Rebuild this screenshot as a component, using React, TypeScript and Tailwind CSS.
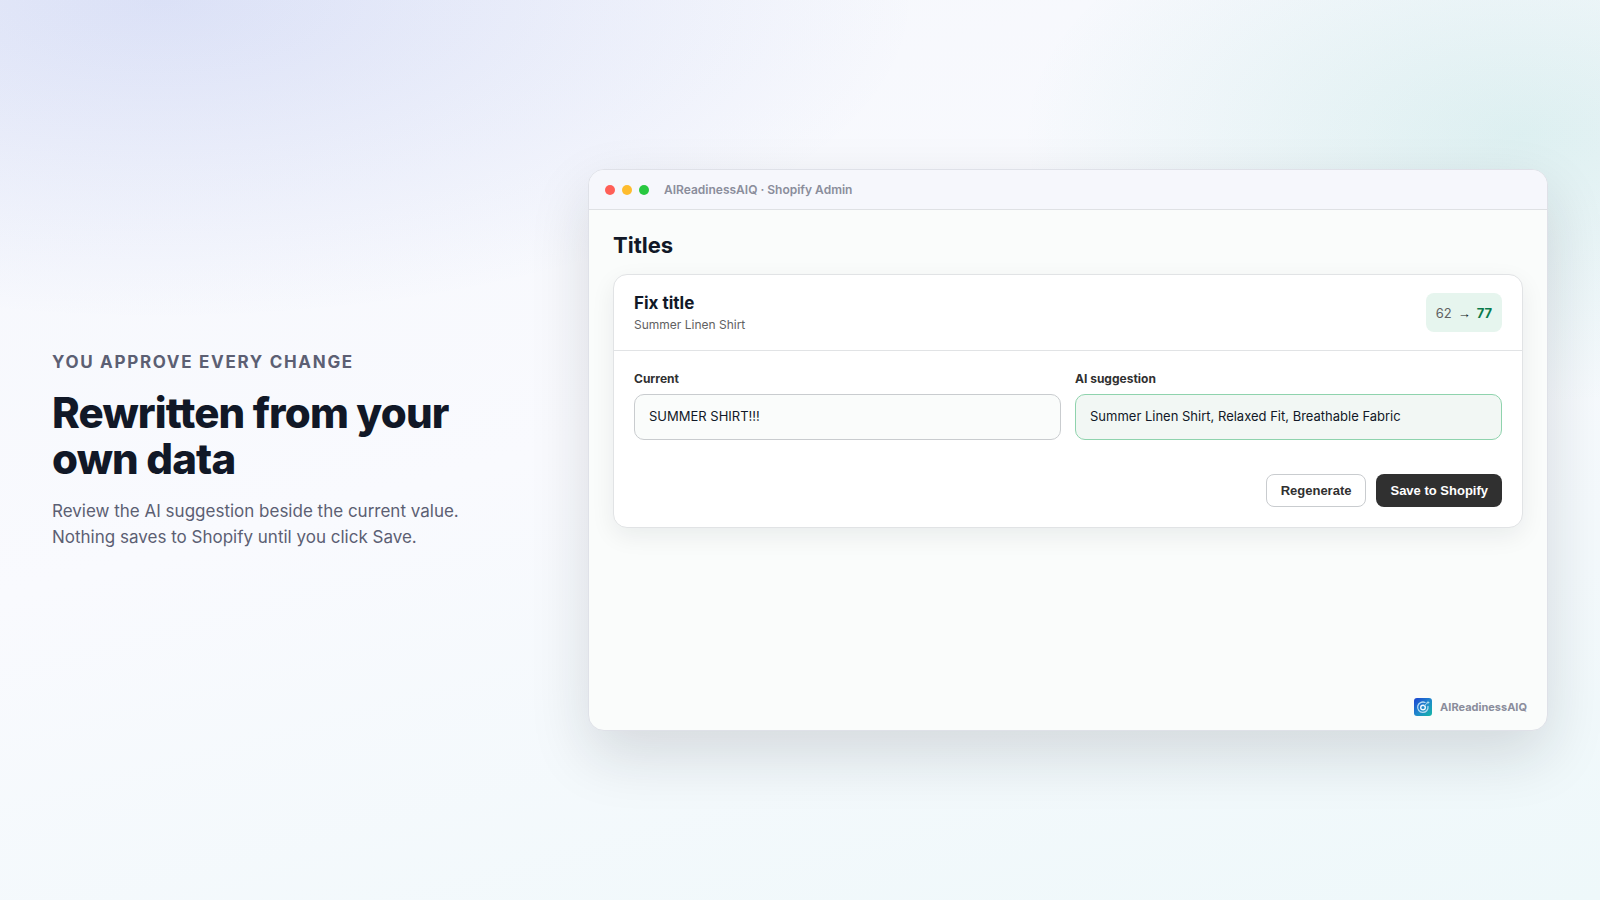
import React from "react";

const trafficLights = ["bg-[#ff5f57]", "bg-[#febc2e]", "bg-[#28c840]"];

function BrandMark() {
  return (
    <svg viewBox="0 0 36 36" className="size-[18px]" aria-hidden="true">
      <defs>
        <linearGradient id="brand" x1="0" y1="0" x2="1" y2="1">
          <stop offset="0.1" stopColor="#1d4fd0" />
          <stop offset="0.5" stopColor="#1f86cc" />
          <stop offset="1" stopColor="#14b8a6" />
        </linearGradient>
      </defs>
      <rect width="36" height="36" rx="6" fill="url(#brand)" />
      <path
        d="M22 9A10.400 10.400 0 1 0 28 17"
        fill="none"
        stroke="#b5d9f2"
        strokeWidth="2.600"
        strokeLinecap="round"
      />
      <circle cx="18" cy="19" r="4.600" fill="none" stroke="#f4fafe" strokeWidth="2.800" />
      <path d="M21 15.500l5-5" stroke="#b5d9f2" strokeWidth="2" strokeLinecap="round" />
      <path d="M28 5l1 3 3 1-3 1-1 3-1-3-3-1 3-1z" fill="#b9e0ee" />
    </svg>
  );
}

function Field({
  id,
  label,
  value,
  tone,
}: {
  id: string;
  label: string;
  value: string;
  tone: string;
}) {
  return (
    <div className="flex min-w-0 flex-col gap-[7px]">
      <label htmlFor={id} className="text-xs leading-4 font-bold text-[#303030]">
        {label}
      </label>
      <input
        id={id}
        readOnly
        defaultValue={value}
        className={`w-full rounded-[10px] border px-3.5 pt-3 pb-3.5 text-[13px] leading-[18px] text-[#111827] outline-none ${tone}`}
      />
    </div>
  );
}

export default function App() {
  return (
    <main className="grid min-h-screen grid-cols-[1fr_2fr] items-center gap-14 bg-[radial-gradient(ellipse_760px_320px_at_10%_0%,rgba(43,75,210,0.13),transparent),radial-gradient(ellipse_500px_270px_at_95%_15%,rgba(20,165,145,0.12),transparent),linear-gradient(165deg,#f5f7fc_0%,#f9fafe_45%,#eef8fa_100%)] px-[52px] font-['Inter',sans-serif] text-[#111827]">
      <section>
        <p className="text-[17px] leading-[22px] font-bold tracking-[0.1em] text-[#5c5f73] uppercase">
          You approve every change
        </p>
        <h1 className="mt-[17px] text-[42px] leading-[46px] font-extrabold tracking-[-0.02em]">
          Rewritten from your own data
        </h1>
        <p className="mt-4 max-w-[420px] text-[17px] leading-[26px] text-[#5c5f73]">
          Review the AI suggestion beside the current value. Nothing saves to Shopify until you
          click Save.
        </p>
      </section>

      <section className="flex min-h-[562px] flex-col overflow-hidden rounded-2xl border border-[#dfe1e8] bg-[#fafcfb] shadow-[0_24px_60px_rgba(20,26,32,0.14)]">
        <header className="flex items-center border-b border-[#dfe1e4] bg-[#f6f7fc] px-4 py-[11px]">
          <div className="flex gap-[7px]">
            {trafficLights.map((color) => (
              <span key={color} className={`size-2.5 rounded-full ${color}`} />
            ))}
          </div>
          <span className="ml-[15px] text-xs leading-[17px] font-semibold text-[#8a8d9b]">
            AIReadinessAIQ · Shopify Admin
          </span>
        </header>

        <div className="flex-1 px-6 pt-[22px]">
          <h2 className="text-[22px] leading-[26px] font-bold">Titles</h2>
          <article className="mt-4 rounded-[14px] border border-[#e1e3e5] bg-white shadow-[0_8px_24px_rgba(17,24,39,0.07)]">
            <div className="flex items-center justify-between border-b border-[#e1e3e5] px-5 py-[18px]">
              <div>
                <h3 className="text-[17px] leading-5 font-bold">Fix title</h3>
                <p className="mt-1 text-xs leading-[15px] text-[#616161]">Summer Linen Shirt</p>
              </div>
              <div className="flex items-center gap-1.5 rounded-lg bg-[#e6f5ee] px-2.5 pt-3 pb-2.5 text-[13px] leading-[17px]">
                <span className="text-[#616161]">62</span>
                <span className="font-['Liberation_Sans',sans-serif] font-bold">→</span>
                <strong className="font-bold text-[#0b7a4b]">77</strong>
              </div>
            </div>

            <div className="grid grid-cols-2 gap-3.5 px-5 pt-5">
              <Field
                id="current"
                label="Current"
                value="SUMMER SHIRT!!!"
                tone="border-[#c9cccf] bg-[#fafcfb]"
              />
              <Field
                id="suggestion"
                label="AI suggestion"
                value="Summer Linen Shirt, Relaxed Fit, Breathable Fabric"
                tone="border-[#8fd3ad] bg-[#f2f7f4]"
              />
            </div>

            <div className="flex justify-end gap-2.5 px-5 pt-[34px] pb-5 font-['Liberation_Sans',sans-serif] text-[13px] leading-[15px] font-semibold">
              <button
                type="button"
                className="rounded-lg border border-[#c9cccf] bg-white px-3.5 py-2 text-[#303030]"
              >
                Regenerate
              </button>
              <button
                type="button"
                className="rounded-lg bg-[#303030] px-3.5 py-[9px] text-white"
              >
                Save to Shopify
              </button>
            </div>
          </article>
        </div>

        <footer className="flex items-center justify-end gap-2 px-5 pb-[14px]">
          <BrandMark />
          <span className="text-[11px] leading-[14px] font-bold text-[#8a8d9b]">
            AIReadinessAIQ
          </span>
        </footer>
      </section>
    </main>
  );
}
